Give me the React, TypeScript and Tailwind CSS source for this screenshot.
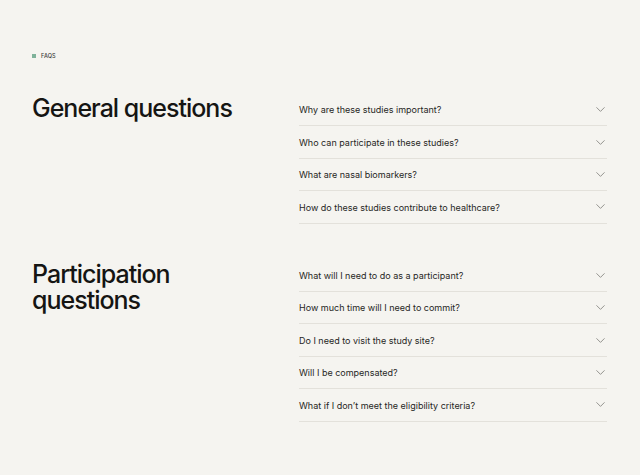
import { ChevronDown } from 'lucide-react';

const general = [
  'Why are these studies important?',
  'Who can participate in these studies?',
  'What are nasal biomarkers?',
  'How do these studies contribute to healthcare?',
];

const participation = [
  'What will I need to do as a participant?',
  'How much time will I need to commit?',
  'Do I need to visit the study site?',
  'Will I be compensated?',
  'What if I don\u2019t meet the eligibility criteria?',
];

function Section({ title, items }: { title: React.ReactNode; items: string[] }) {
  return (
    <div className="flex">
      <h2 className="w-[267px] shrink-0 text-[25px] leading-[26px] tracking-[-0.04em] text-[#151513] font-medium pt-[1px]">
        {title}
      </h2>
      <div className="w-[308px]">
        {items.map((q) => (
          <div key={q} className="h-[32.4px] flex items-center justify-between border-b border-[#e3e1db]">
            <span className="text-[9px] text-[#262624] pt-[1px]">{q}</span>
            <ChevronDown className="w-[15px] h-[15px] text-[#7d7c78] mr-[-1px]" strokeWidth={1.3} />
          </div>
        ))}
      </div>
    </div>
  );
}

export default function App() {
  return (
    <div className="min-h-[475px] bg-[#f5f4f0] px-8 pt-[53px]" style={{ fontFamily: 'Inter, "Noto Sans", sans-serif' }}>
      <div className="flex items-center gap-[5px] h-[6px]">
        <span className="w-[4px] h-[4px] bg-[#7fb29a]" />
        <span className="text-[5.5px] font-medium text-[#3a3a38] tracking-wide">FAQS</span>
      </div>
      <div className="mt-[35px] flex flex-col gap-[36px]">
        <Section title="General questions" items={general} />
        <Section title={<>Participation<br />questions</>} items={participation} />
      </div>
    </div>
  );
}
